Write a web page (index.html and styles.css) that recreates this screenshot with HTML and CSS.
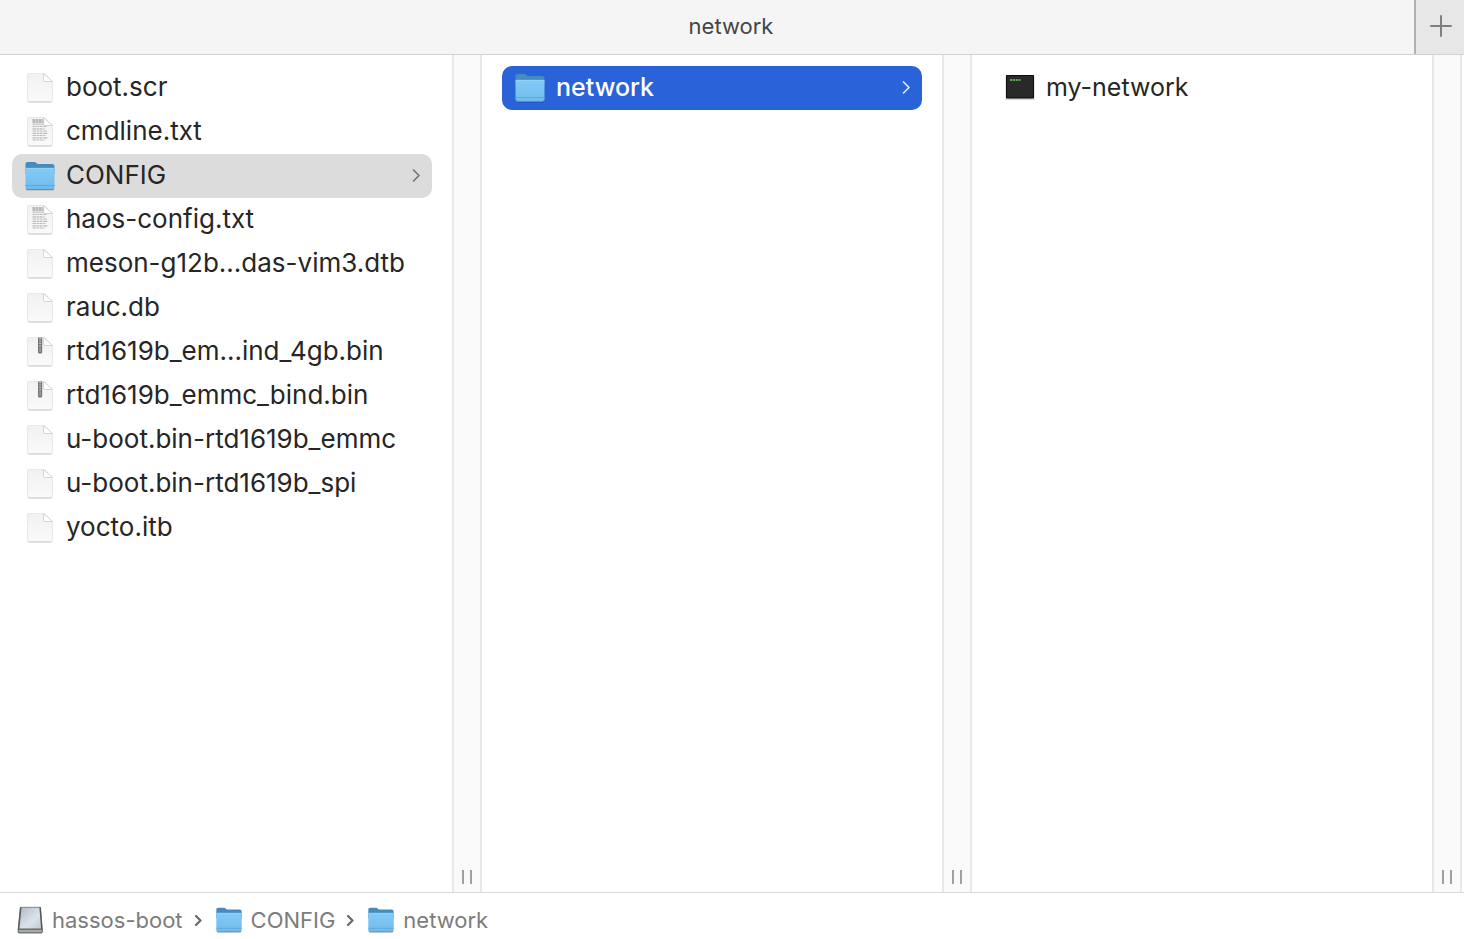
FILE: index.html
```html
<!DOCTYPE html>
<html lang="en">
<head>
<meta charset="utf-8">
<title>network</title>
<link rel="stylesheet" href="styles.css">
</head>
<body>
<svg class="defs" aria-hidden="true">
  <defs>
    <linearGradient id="paper" x1="0" y1="0" x2="0" y2="1">
      <stop offset="0" stop-color="#f1f1f1"/><stop offset="1" stop-color="#fafafa"/>
    </linearGradient>
    <linearGradient id="front" x1="0" y1="0" x2="0" y2="1">
      <stop offset="0" stop-color="#84cbf6"/><stop offset="1" stop-color="#6fbaec"/>
    </linearGradient>
    <linearGradient id="metal" x1="0" y1="0" x2="1" y2="1">
      <stop offset="0" stop-color="#b0b8c2"/><stop offset=".6" stop-color="#dbe3ec"/><stop offset="1" stop-color="#bec6cf"/>
    </linearGradient>
    <symbol id="doc" viewBox="0 0 32 32">
      <path d="M4.500 2h15.500l9 9v17q0 2.500-2 2.500H5q-2 0-2-2V3.500Q3 2 4.500 2z" fill="#000" opacity=".08"/>
      <path d="M5 1.500h15.500l8 8V27.500q0 2-2 2H5q-1.500 0-1.500-1.500V3q0-1.500 1.500-1.500z" fill="url(#paper)" stroke="#e9e9e9"/>
      <path d="M4.500 30h23" stroke="#cdcdcd"/>
      <path d="M19.500 1.500V8q0 1.500 1.500 1.500h7.500z" fill="#fff" stroke="#d6d6d6"/>
    </symbol>
    <symbol id="text" viewBox="0 0 32 32">
      <use href="#doc"/>
      <path d="M8.500 4h10.500M8.500 6h11" stroke="#a4a4a4" stroke-width="1.300" stroke-dasharray="3 .6 2 .5"/>
      <path d="M8.500 10.500h14M8.500 12.800h12M8.500 15h14.500M8.500 17.300h15M8.500 19.500h13M8.500 21.800h15M8.500 24h12" stroke="#bababa" stroke-width="1.200" stroke-dasharray="4 .6 2 .5 3 .7"/>
      <path d="M8.500 8.200h11" stroke="#bcbcbc" stroke-width="1"/>
    </symbol>
    <symbol id="zip" viewBox="0 0 32 32">
      <use href="#doc"/>
      <path d="M14 1.500h4.200V16q0 1.500-1.200 1.500h-1.800Q14 17.500 14 16z" fill="#777"/>
      <path d="M16.100 2v9" stroke="#c8c8c8" stroke-width="1.800" stroke-dasharray="1.200 1.200"/>
      <path d="M16.100 11.500V16" stroke="#aaa" stroke-width="1.200"/>
    </symbol>
    <symbol id="folder" viewBox="0 0 32 32">
      <path d="M2 28.500h28v1q0 1-2 1H4q-2 0-2-1z" fill="#000" opacity=".2"/>
      <path d="M1.500 4q0-2 2-2h6.500q1.500 0 2.500 1l1 1h14.500q2.500 0 2.500 2.500V14h-29z" fill="#458bbf"/>
      <path d="M1.500 8h29V27q0 2.500-2.500 2.500H4q-2.500 0-2.500-2.500z" fill="url(#front)"/>
      <path d="M2 8.300h28" stroke="#9bd6f8" stroke-width=".8"/>
      <path d="M1.500 25.500h29" stroke="#62a8da"/>
      <path d="M2 28.500q1 1 2 1h24q1 0 2-1" fill="none" stroke="#4c93c6"/>
    </symbol>
    <symbol id="exec" viewBox="0 0 32 32">
      <path d="M1.500 4h29v24h-29z" fill="#000" opacity=".16"/>
      <path d="M2.500 3.500h27V26h-27z" fill="#292929" stroke="#0c0c0c"/>
      <path d="M6 8h10.500" stroke="#59a451" stroke-width="2" stroke-dasharray="2.200 .6"/>
    </symbol>
    <symbol id="disk" viewBox="0 0 32 32">
      <path d="M5 1.500h23l2 25H2.500z" fill="url(#metal)" stroke="#77797c"/>
      <path d="M5.500 1.500L3 26.500M27.500 1.500L29.500 26.500" stroke="#55585b" stroke-width="1.600"/>
      <path d="M2.500 26.500h27.500V30q0 .8-1 .8H3.500q-1 0-1-.8z" fill="#a8aaa8" stroke="#4a4c4e"/>
    </symbol>
    <symbol id="chevron" viewBox="0 0 12 16">
      <path d="M3.500 2l5.500 5.500L3.500 13" fill="none" stroke="currentColor" stroke-width="1.700" stroke-linecap="round" stroke-linejoin="round"/>
    </symbol>
    <symbol id="crumb" viewBox="0 0 12 16">
      <path d="M3 4l4.500 4.500L3 13" fill="none" stroke="currentColor" stroke-width="2.300" stroke-linecap="round" stroke-linejoin="round"/>
    </symbol>
  </defs>
</svg>
<div class="window">
  <header class="tabs">
    <button class="tab">network</button>
    <button class="new-tab" aria-label="New tab"><svg class="plus" viewBox="0 0 22 22"><path d="M11 1v20M1 11h20" stroke="#7f7f7f" stroke-width="2" stroke-linecap="round"/></svg></button>
  </header>
  <main class="browser">
    <section class="column first">
      <div class="list">
        <button class="row"><svg class="icon"><use href="#doc"/></svg><span class="name">boot.scr</span></button>
        <button class="row"><svg class="icon"><use href="#text"/></svg><span class="name">cmdline.txt</span></button>
        <button class="row open"><svg class="icon"><use href="#folder"/></svg><span class="name">CONFIG</span><svg class="chevron"><use href="#chevron"/></svg></button>
        <button class="row"><svg class="icon"><use href="#text"/></svg><span class="name">haos-config.txt</span></button>
        <button class="row"><svg class="icon"><use href="#doc"/></svg><span class="name">meson-g12b...das-vim3.dtb</span></button>
        <button class="row"><svg class="icon"><use href="#doc"/></svg><span class="name">rauc.db</span></button>
        <button class="row"><svg class="icon"><use href="#zip"/></svg><span class="name">rtd1619b_em...ind_4gb.bin</span></button>
        <button class="row"><svg class="icon"><use href="#zip"/></svg><span class="name">rtd1619b_emmc_bind.bin</span></button>
        <button class="row"><svg class="icon"><use href="#doc"/></svg><span class="name">u-boot.bin-rtd1619b_emmc</span></button>
        <button class="row"><svg class="icon"><use href="#doc"/></svg><span class="name">u-boot.bin-rtd1619b_spi</span></button>
        <button class="row"><svg class="icon"><use href="#doc"/></svg><span class="name">yocto.itb</span></button>
      </div>
      <div class="gutter"><span class="grip"></span></div>
    </section>
    <section class="column">
      <div class="list">
        <button class="row selected"><svg class="icon"><use href="#folder"/></svg><span class="name">network</span><svg class="chevron"><use href="#chevron"/></svg></button>
      </div>
      <div class="gutter"><span class="grip"></span></div>
    </section>
    <section class="column">
      <div class="list">
        <button class="row"><svg class="icon"><use href="#exec"/></svg><span class="name">my-network</span></button>
      </div>
      <div class="gutter"><span class="grip"></span></div>
    </section>
  </main>
  <nav class="path" aria-label="Path">
    <a class="place" href="#"><svg class="small-icon"><use href="#disk"/></svg>hassos-boot</a>
    <svg class="separator"><use href="#crumb"/></svg>
    <a class="place" href="#"><svg class="small-icon"><use href="#folder"/></svg>CONFIG</a>
    <svg class="separator"><use href="#crumb"/></svg>
    <a class="place" href="#"><svg class="small-icon"><use href="#folder"/></svg>network</a>
  </nav>
</div>
</body>
</html>
```
FILE: styles.css
```css
* { box-sizing: border-box; }
body {
  margin: 0;
  font-family: Inter, "Liberation Sans", sans-serif;
  color: #262626;
  background: #fff;
}
button {
  margin: 0;
  padding: 0;
  border: 0;
  background: none;
  font: inherit;
  color: inherit;
}
svg { display: block; flex: none; }
.defs { position: absolute; width: 0; height: 0; }
.window { display: flex; flex-direction: column; min-height: 100vh; }

.tabs {
  display: flex;
  height: 55px;
  background: #f5f5f5;
  border-bottom: 1px solid #d2d2d2;
}
.tab { flex: 1; padding: 0 0 2px 48px; font-size: 22px; color: #454545; }
.new-tab {
  display: flex;
  align-items: center;
  justify-content: center;
  width: 50px;
  padding: 0 0 2px 2px;
  background: #e7e7e7;
  border-left: 2px solid #b0b0b0;
}
.plus { width: 22px; height: 22px; }

.browser {
  flex: 1;
  display: grid;
  grid-template-columns: 482fr 490fr 490fr;
  padding-right: 2px;
}
.column { display: flex; min-width: 0; }
.list {
  flex: 1;
  min-width: 0;
  display: flex;
  flex-direction: column;
  padding: 11px 20px;
}
.first .list { padding-left: 12px; }
.row {
  display: flex;
  align-items: center;
  gap: 10px;
  height: 44px;
  padding: 0 10px 0 12px;
  border-radius: 10px;
  font-size: 25px;
  line-height: 32px;
  text-align: left;
}
.first .row { font-size: 26px; }
.icon { width: 32px; height: 32px; }
.name { flex: 1; min-width: 0; white-space: nowrap; overflow: hidden; padding-bottom: 2px; }
.chevron { width: 12px; height: 16px; color: #757575; }
.open { background: #dcdcdc; }
.selected { background: #2962d9; color: #fff; font-weight: 500; }
.selected .chevron { color: #dfe9fb; }

.gutter {
  display: flex;
  align-items: flex-end;
  justify-content: center;
  width: 30px;
  padding-bottom: 8px;
  background: #fafafa;
  border: solid #e8e8e8;
  border-width: 0 2px;
}
.grip {
  width: 10px;
  height: 14px;
  border: solid #a0a0a0;
  border-width: 0 2px;
}

.path {
  display: flex;
  align-items: center;
  gap: 9px;
  height: 47px;
  padding: 8px 16px 0;
  border-top: 1px solid #dadada;
  font-size: 22px;
  line-height: 28px;
  color: #7c7c7c;
}
.place { display: flex; align-items: center; gap: 8px; color: inherit; text-decoration: none; }
.small-icon { width: 28px; height: 28px; }
.separator { width: 14px; height: 16px; color: #6c6c6c; }
```
